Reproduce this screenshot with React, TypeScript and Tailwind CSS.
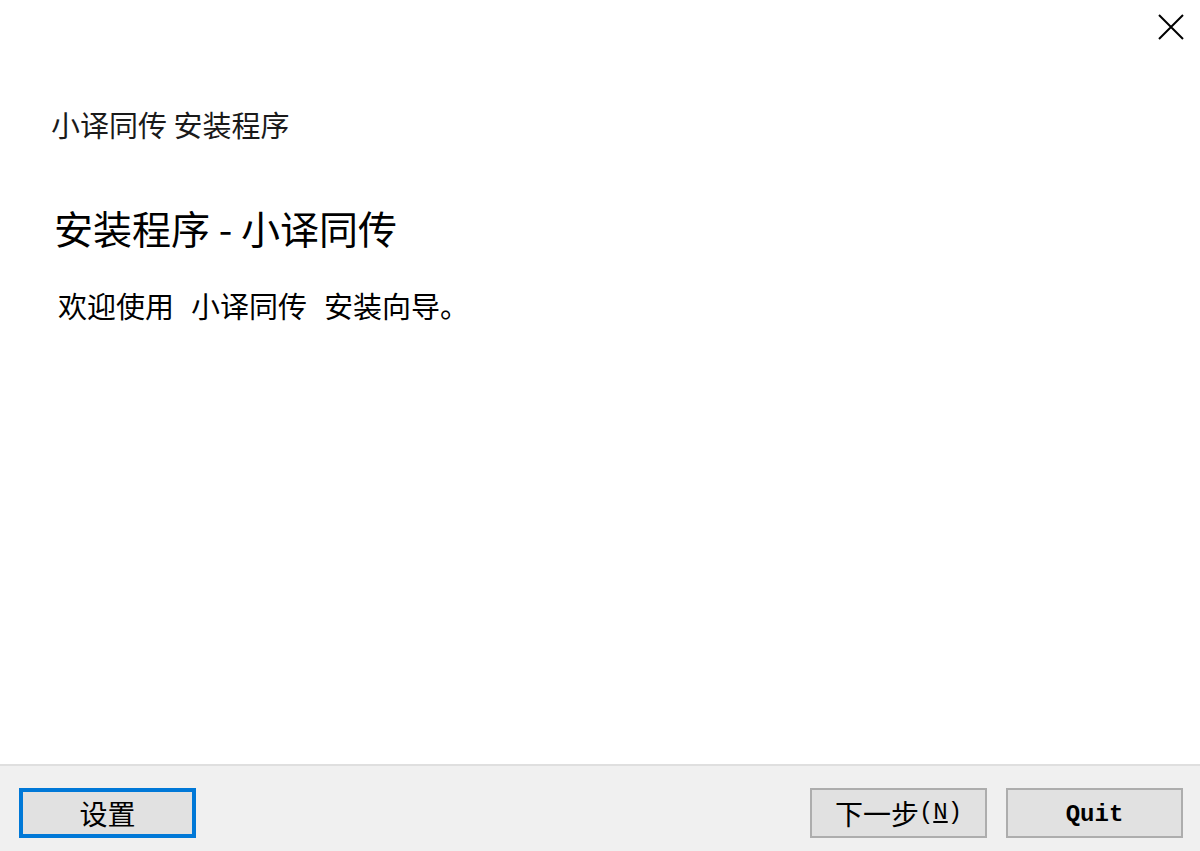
import React from "react";

const cjk = '"Noto Sans CJK SC", "Noto Sans", sans-serif';
const mono = '"Liberation Mono", "Noto Sans CJK SC", monospace';

function Btn({ children, focused }: { children: React.ReactNode; focused?: boolean }) {
  return (
    <button
      className={
        "w-[177px] h-[50px] flex items-center justify-center bg-[#e1e1e1] text-black text-[28px] leading-none " +
        (focused ? "border-[4px] border-[#0078d7]" : "border-[2px] border-[#adadad]")
      }
      style={{ fontFamily: cjk }}
    >
      {children}
    </button>
  );
}

export default function App() {
  return (
    <div className="w-[1200px] h-[851px] flex flex-col bg-white text-black" style={{ fontFamily: cjk }}>
      <div className="flex-1 flex flex-col">
        <div className="flex justify-end pt-[14px] pr-[16px]">
          <svg width="26" height="26" viewBox="0 0 26 26">
            <path d="M1 1 L25 25 M25 1 L1 25" stroke="#000" strokeWidth="2" fill="none" />
          </svg>
        </div>
        <div className="mt-[70px] pl-[51px] text-[29px] leading-[28px] text-[#1a1a1a]">小译同传 安装程序</div>
        <div className="mt-[69px] pl-[54px] text-[39px] leading-[40px]">安装程序 - 小译同传</div>
        <div className="mt-[43px] pl-[58px] text-[29px] leading-[30px] flex">
          <span>欢迎使用</span>
          <span className="w-[17px]" />
          <span>小译同传</span>
          <span className="w-[17px]" />
          <span>安装向导。</span>
        </div>
      </div>
      <div className="h-[87px] border-t-[2px] border-[#dfdfdf] bg-[#f0f0f0] flex items-start pt-[22px] pl-[19px] pr-[17px]">
        <Btn focused>设置</Btn>
        <div className="flex-1" />
        <div className="flex gap-[19px]">
          <Btn>
            <span>下一步</span>
            <span className="text-[24px]" style={{ fontFamily: mono }}>
              (<span className="underline">N</span>)
            </span>
          </Btn>
          <Btn>
            <span className="text-[24px] pt-[4px] font-semibold" style={{ fontFamily: mono }}>Quit</span>
          </Btn>
        </div>
      </div>
    </div>
  );
}
